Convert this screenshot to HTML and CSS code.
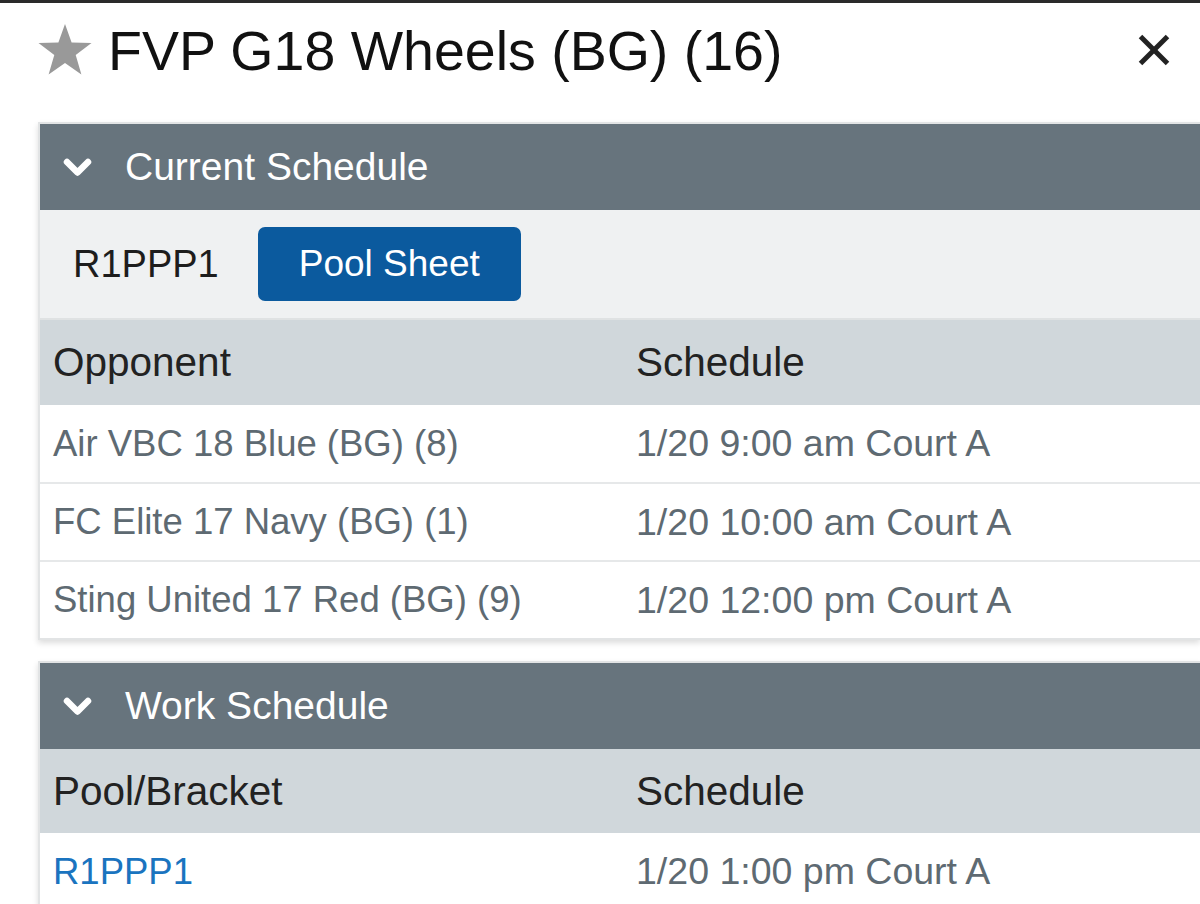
FILE: index.html
```html
<!DOCTYPE html>
<html>
<head>
<meta charset="utf-8">
<link rel="stylesheet" href="styles.css">
</head>
<body>
<div class="page">
  <div class="top">
    <svg class="star" width="54" height="52" viewBox="0 0 54 52">
      <polygon points="27,0 33.6,18.5 53.5,19 37.7,31.1 43.4,50.5 27,39 10.6,50.5 16.3,31.1 0.5,19 20.4,18.5" fill="#999999"/>
    </svg>
    <h1 class="title">FVP G18 Wheels (BG) (16)</h1>
    <svg class="close" width="32" height="32" viewBox="0 0 32 32">
      <line x1="2.5" y1="2.5" x2="29.5" y2="29.5" stroke="#222" stroke-width="5"/>
      <line x1="29.5" y1="2.5" x2="2.5" y2="29.5" stroke="#222" stroke-width="5"/>
    </svg>
  </div>

  <div class="card">
    <div class="card-head">
      <svg class="chev" width="29" height="19" viewBox="0 0 29 19">
        <polyline points="4,4 14.5,14.5 25,4" fill="none" stroke="#fff" stroke-width="6.5" stroke-linecap="round" stroke-linejoin="round"/>
      </svg>
      <span class="head-text">Current Schedule</span>
    </div>
    <div class="sub">
      <span class="pool-name">R1PPP1</span>
      <span class="btn">Pool Sheet</span>
    </div>
    <div class="row thead">
      <div>Opponent</div>
      <div>Schedule</div>
    </div>
    <div class="row tr">
      <div>Air VBC 18 Blue (BG) (8)</div>
      <div>1/20 9:00 am Court A</div>
    </div>
    <div class="row tr">
      <div>FC Elite 17 Navy (BG) (1)</div>
      <div>1/20 10:00 am Court A</div>
    </div>
    <div class="row tr">
      <div>Sting United 17 Red (BG) (9)</div>
      <div>1/20 12:00 pm Court A</div>
    </div>
  </div>

  <div class="card card2">
    <div class="card-head">
      <svg class="chev" width="29" height="19" viewBox="0 0 29 19">
        <polyline points="4,4 14.5,14.5 25,4" fill="none" stroke="#fff" stroke-width="6.5" stroke-linecap="round" stroke-linejoin="round"/>
      </svg>
      <span class="head-text">Work Schedule</span>
    </div>
    <div class="row thead thead2">
      <div>Pool/Bracket</div>
      <div>Schedule</div>
    </div>
    <div class="row tr">
      <div class="link">R1PPP1</div>
      <div>1/20 1:00 pm Court A</div>
    </div>
  </div>
</div>
</body>
</html>
```

FILE: styles.css
```css
html, body {
  margin: 0;
  padding: 0;
  background: #ffffff;
}
body {
  font-family: "Liberation Sans", Arial, sans-serif;
  overflow: hidden;
  width: 1200px;
  height: 904px;
}
.page {
  border-top: 3px solid #2a2a2a;
}
.top {
  height: 97px;
  display: flex;
  align-items: center;
  padding-left: 38px;
  padding-right: 30px;
}
.star {
  flex: none;
  margin-top: -4px;
}
.title {
  margin: 0 0 0 16px;
  font-size: 55.5px;
  font-weight: normal;
  color: #111;
  line-height: 1;
  flex: 1;
}
.close {
  flex: none;
  margin-top: -4px;
}
.card {
  margin-top: 22px;
  margin-left: 38px;
  border: 2px solid #e2e4e5;
  border-right: none;
  box-shadow: 0 3px 6px rgba(0, 0, 0, 0.14);
  background: #fff;
}
.card2 {
  margin-top: 21px;
}
.card-head {
  height: 86px;
  background: #67747d;
  display: flex;
  align-items: center;
  padding-left: 23px;
}
.chev {
  flex: none;
}
.head-text {
  margin-left: 33px;
  color: #ffffff;
  font-size: 39px;
}
.sub {
  height: 108px;
  background: #eff1f2;
  border-bottom: 2px solid #dfe2e3;
  display: flex;
  align-items: center;
  padding-left: 33px;
}
.pool-name {
  font-size: 38px;
  color: #1d1d1d;
}
.btn {
  margin-left: 39px;
  height: 74px;
  padding: 0 41px;
  display: flex;
  align-items: center;
  background: #0b5a9e;
  color: #ffffff;
  border-radius: 7px;
  font-size: 37px;
  margin-top: -1px;
}
.row {
  display: grid;
  grid-template-columns: 583px 1fr;
  padding-left: 13px;
  align-items: center;
}
.thead {
  height: 85px;
  background: #d0d7db;
  color: #222;
  font-size: 40.5px;
}
.thead2 {
  height: 84px;
}
.tr {
  height: 76px;
  border-top: 2px solid #e6e8e9;
  color: #5e6a72;
  font-size: 36.5px;
}
.tr > div + div {
  font-size: 37.5px;
}
.thead + .tr {
  border-top: none;
  height: 77px;
}
.link {
  color: #1a74bf;
}
```
